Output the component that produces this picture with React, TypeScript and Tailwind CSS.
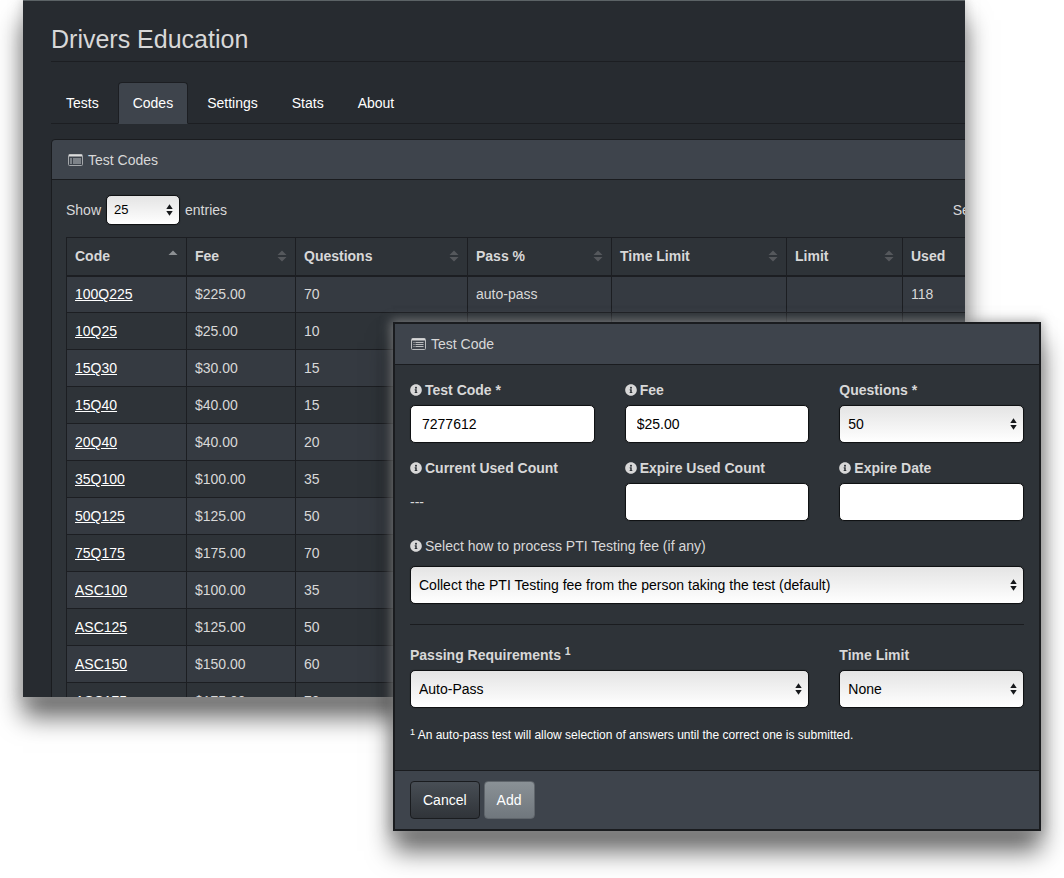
import { FaInfoCircle } from "react-icons/fa";
import type { ReactNode, SelectHTMLAttributes } from "react";

const tabs = ["Tests", "Codes", "Settings", "Stats", "About"];

const columns = [
  { name: "Code", width: "w-[120px]", sort: "asc" },
  { name: "Fee", width: "w-[109px]", sort: "both" },
  { name: "Questions", width: "w-[172px]", sort: "both" },
  { name: "Pass %", width: "w-[144px]", sort: "both" },
  { name: "Time Limit", width: "w-[175px]", sort: "both" },
  { name: "Limit", width: "w-[116px]", sort: "both" },
  { name: "Used", width: "", sort: "both" },
];

const rows = [
  ["100Q225", "$225.00", "70", "auto-pass", "", "", "118"],
  ["10Q25", "$25.00", "10", "", "", "", ""],
  ["15Q30", "$30.00", "15", "", "", "", ""],
  ["15Q40", "$40.00", "15", "", "", "", ""],
  ["20Q40", "$40.00", "20", "", "", "", ""],
  ["35Q100", "$100.00", "35", "", "", "", ""],
  ["50Q125", "$125.00", "50", "", "", "", ""],
  ["75Q175", "$175.00", "70", "", "", "", ""],
  ["ASC100", "$100.00", "35", "", "", "", ""],
  ["ASC125", "$125.00", "50", "", "", "", ""],
  ["ASC150", "$150.00", "60", "", "", "", ""],
  ["ASC175", "$175.00", "70", "", "", "", ""],
];

const PanelIcon = () => (
  <svg width="15" height="12" viewBox="0 0 15 12" fill="none" aria-hidden="true">
    <rect x="0.5" y="0.5" width="14" height="11" rx="1" stroke="#a4a7aa" />
    <path d="M1 1.5h13" stroke="#dcdcdc" strokeWidth="2" />
    <path d="M2 4h2v6H2zM5 4h8v6H5z" fill="#7d8288" />
  </svg>
);

const ListIcon = () => (
  <svg width="15" height="12" viewBox="0 0 15 12" fill="none" aria-hidden="true">
    <rect x="0.5" y="0.5" width="14" height="11" rx="1" stroke="#b9bbbd" />
    <path d="M1 1.5h13" stroke="#d8d8d8" strokeWidth="2" />
    <path
      d="M2.5 4.5h1M2.5 6.5h1M2.5 8.5h1M4.5 4.5h8M4.5 6.5h8M4.5 8.5h8"
      stroke="#b9bbbd"
    />
  </svg>
);

const SortIcon = ({ sort }: { sort: string }) => (
  <svg width="10" height="12" viewBox="0 0 10 12" aria-hidden="true">
    {sort === "asc" ? (
      <path d="M0.5 5 5 0.5 9.5 5z" fill="#8d9093" />
    ) : (
      <path d="M0.5 5 5 0.5 9.5 5zM0.5 7h9L5 11.5z" fill="#55585c" />
    )}
  </svg>
);

type SelectProps = SelectHTMLAttributes<HTMLSelectElement> & {
  option: string;
  small?: boolean;
};

const Select = ({ option, small, ...props }: SelectProps) => (
  <span className={small ? "relative block w-[74px]" : "relative block"}>
    <select
      {...props}
      className={`block w-full appearance-none rounded-[5px] border border-[#101214] bg-linear-to-b from-[#e4e4e4] to-white text-black shadow-[0_0_1px_rgba(0,0,0,0.6)] ${
        small ? "h-[30px] pl-[7px] pr-4 text-[13px]" : "h-[38px] pl-2 pr-6 text-sm"
      }`}
    >
      <option>{option}</option>
    </select>
    <svg
      width="7"
      height="12"
      viewBox="0 0 7 12"
      className="pointer-events-none absolute right-[7px] top-1/2 -translate-y-1/2"
      aria-hidden="true"
    >
      <path d="M0.3 5 3.5 0.3 6.7 5zM0.3 7h6.4L3.5 11.7z" fill="#16181b" />
    </svg>
  </span>
);

const Label = ({
  htmlFor,
  info = true,
  className = "mb-[5px] font-bold",
  children,
}: {
  htmlFor: string;
  info?: boolean;
  className?: string;
  children: ReactNode;
}) => (
  <label htmlFor={htmlFor} className={`flex h-5 items-center gap-[3px] ${className}`}>
    {info && <FaInfoCircle className="size-3" />}
    <span>{children}</span>
  </label>
);

const TextInput = ({ id, value }: { id: string; value?: string }) => (
  <input
    id={id}
    type="text"
    defaultValue={value}
    className="block h-[38px] w-full rounded-[5px] border border-[#101214] bg-white px-[11px] text-sm text-black shadow-[0_0_1px_rgba(0,0,0,0.6)]"
  />
);

const CodesPage = () => (
  <main className="mr-[99px] ml-[23px] h-[697px] overflow-hidden border-t border-[#5c6366] bg-[#272b30] pl-7 text-[#d8d8d8] shadow-[0_0_10px_1px_rgba(170,170,170,0.6),0_20px_24px_rgba(0,0,0,0.6)]">
    <div className="w-[1100px]">
      <h1 className="border-b border-[#1c1e22] pt-[21px] pb-1 text-[25px] leading-[35px]">
        Drivers Education
      </h1>
      <nav className="mt-5 flex gap-1 border-b border-[#1c1e22] text-white">
        {tabs.map((tab) => (
          <a
            key={tab}
            href="#"
            className={`-mb-px rounded-t border px-3.5 pt-2.5 pb-2.5 leading-5 ${
              tab === "Codes"
                ? "border-[#1c1e22] border-b-[#3e444c] bg-[#3e444c]"
                : "border-transparent"
            }`}
          >
            {tab}
          </a>
        ))}
      </nav>
      <section className="mt-[15px] rounded border border-[#1a1c1f] bg-[#2e3338]">
        <h2 className="flex h-10 items-center gap-[5px] rounded-t border-b border-[#1a1c1f] bg-[#3e444c] px-4">
          <PanelIcon />
          Test Codes
        </h2>
        <div className="px-3.5 pt-[15px]">
          <div className="flex items-center justify-between">
            <div className="flex items-center gap-[5px]">
              <label htmlFor="entries">Show</label>
              <Select id="entries" option="25" small />
              <span>entries</span>
            </div>
            <div className="flex items-center gap-[5px]">
              <label htmlFor="search">Search:</label>
              <input
                id="search"
                type="search"
                className="h-[30px] w-[130px] rounded border border-[#101214] bg-white px-2 text-black"
              />
            </div>
          </div>
          <table className="mt-3 w-full table-fixed border-collapse border border-[#1c1e22] text-left">
            <thead>
              <tr className="h-[38px]">
                {columns.map((column) => (
                  <th
                    key={column.name}
                    className={`border border-b-2 border-[#1c1e22] px-2 ${column.width}`}
                  >
                    <div className="flex items-center justify-between">
                      {column.name}
                      <SortIcon sort={column.sort} />
                    </div>
                  </th>
                ))}
              </tr>
            </thead>
            <tbody>
              {rows.map((row) => (
                <tr key={row[0]} className="h-[37px] odd:bg-[#353a41]">
                  {row.map((cell, i) => (
                    <td key={i} className="border border-[#1c1e22] px-2">
                      {i === 0 ? (
                        <a href="#" className="text-white underline">
                          {cell}
                        </a>
                      ) : (
                        cell
                      )}
                    </td>
                  ))}
                </tr>
              ))}
            </tbody>
          </table>
        </div>
      </section>
    </div>
  </main>
);

const CodeDialog = () => (
  <form
    aria-label="Test Code"
    className="absolute top-[322px] right-[23px] left-[393px] border-2 border-[#1a1c1f] bg-[#2e3338] text-[#d8d8d8] shadow-[0_0_10px_2px_rgba(150,150,150,0.7),0_20px_24px_rgba(0,0,0,0.6)]"
  >
    <h2 className="flex h-[41px] items-center gap-[5px] border-b border-[#1a1c1f] bg-[#3e444c] px-4">
      <ListIcon />
      Test Code
    </h2>
    <div className="px-[15px] pt-[15px] pb-[25px]">
      <div className="grid grid-cols-3 gap-x-[30px] gap-y-[15px]">
        <div>
          <Label htmlFor="code">Test Code *</Label>
          <TextInput id="code" value="7277612" />
        </div>
        <div>
          <Label htmlFor="fee">Fee</Label>
          <TextInput id="fee" value="$25.00" />
        </div>
        <div>
          <Label htmlFor="questions" info={false}>
            Questions *
          </Label>
          <Select id="questions" option="50" />
        </div>
        <div>
          <Label htmlFor="used">Current Used Count</Label>
          <output id="used" className="block leading-[38px]">
            ---
          </output>
        </div>
        <div>
          <Label htmlFor="expire-count">Expire Used Count</Label>
          <TextInput id="expire-count" />
        </div>
        <div>
          <Label htmlFor="expire-date">Expire Date</Label>
          <TextInput id="expire-date" />
        </div>
        <div className="col-span-3">
          <Label htmlFor="process" className="mb-2.5">
            Select how to process PTI Testing fee (if any)
          </Label>
          <Select
            id="process"
            option="Collect the PTI Testing fee from the person taking the test (default)"
          />
        </div>
      </div>
      <hr className="my-5 border-[#1a1c1f]" />
      <div className="grid grid-cols-3 gap-x-[30px]">
        <div className="col-span-2">
          <Label htmlFor="passing" info={false}>
            Passing Requirements <sup>1</sup>
          </Label>
          <Select id="passing" option="Auto-Pass" />
        </div>
        <div>
          <Label htmlFor="time-limit" info={false}>
            Time Limit
          </Label>
          <Select id="time-limit" option="None" />
        </div>
      </div>
      <p className="mt-[17px] text-xs leading-5 text-white">
        <sup>1</sup> An auto-pass test will allow selection of answers until the
        correct one is submitted.
      </p>
    </div>
    <div className="flex gap-1 border-t border-[#1a1c1f] bg-[#3e444c] px-[15px] py-2.5 text-white">
      <button
        type="button"
        className="h-[38px] rounded border border-[#1a1c1f] bg-linear-to-b from-[#484e55] to-[#303439] px-3"
      >
        Cancel
      </button>
      <button
        type="submit"
        className="h-[38px] rounded border border-[#5f656b] bg-linear-to-b from-[#8a9196] to-[#70777d] px-3"
      >
        Add
      </button>
    </div>
  </form>
);

export default function App() {
  return (
    <div className="relative min-h-screen overflow-hidden bg-white font-['Liberation_Sans',Arial,sans-serif] text-sm">
      <CodesPage />
      <CodeDialog />
    </div>
  );
}
